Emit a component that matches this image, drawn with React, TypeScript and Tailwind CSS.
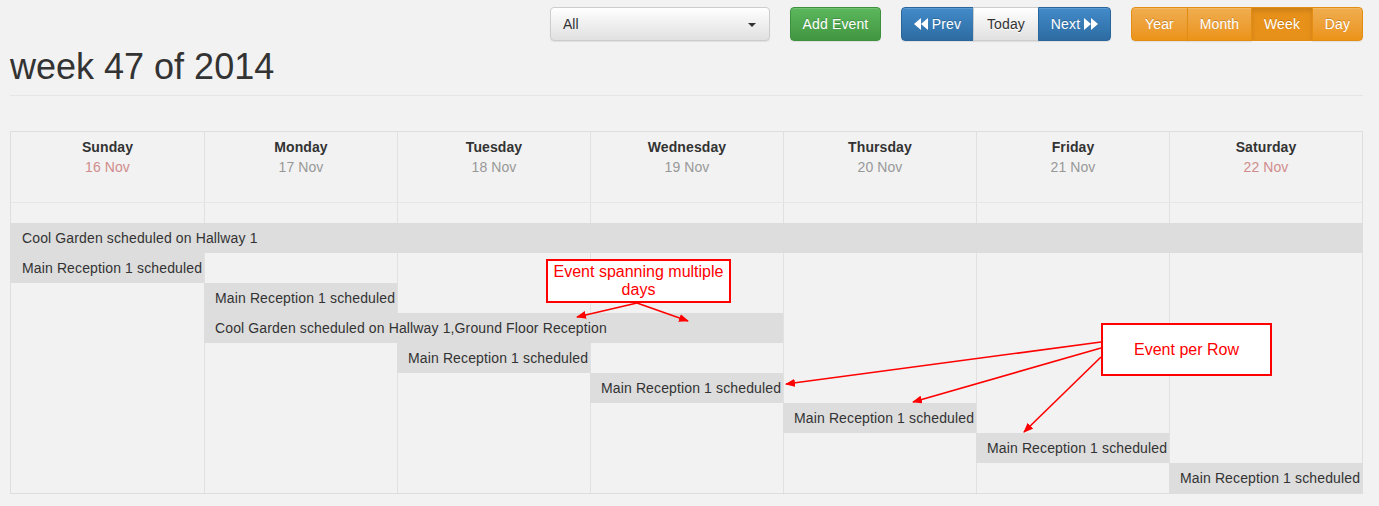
import React from "react";

type Day = { name: string; date: string; weekend?: boolean };
type CalEvent = { start: number; span: number; title: string };

const days: Day[] = [
  { name: "Sunday", date: "16 Nov", weekend: true },
  { name: "Monday", date: "17 Nov" },
  { name: "Tuesday", date: "18 Nov" },
  { name: "Wednesday", date: "19 Nov" },
  { name: "Thursday", date: "20 Nov" },
  { name: "Friday", date: "21 Nov" },
  { name: "Saturday", date: "22 Nov", weekend: true },
];

const events: CalEvent[] = [
  { start: 0, span: 7, title: "Cool Garden scheduled on Hallway 1" },
  { start: 0, span: 1, title: "Main Reception 1 scheduled" },
  { start: 1, span: 1, title: "Main Reception 1 scheduled" },
  { start: 1, span: 3, title: "Cool Garden scheduled on Hallway 1,Ground Floor Reception" },
  { start: 2, span: 1, title: "Main Reception 1 scheduled" },
  { start: 3, span: 1, title: "Main Reception 1 scheduled" },
  { start: 4, span: 1, title: "Main Reception 1 scheduled" },
  { start: 5, span: 1, title: "Main Reception 1 scheduled" },
  { start: 6, span: 1, title: "Main Reception 1 scheduled" },
];

const spanClass: Record<number, string> = {
  1: "col-span-1",
  2: "col-span-2",
  3: "col-span-3",
  4: "col-span-4",
  5: "col-span-5",
  6: "col-span-6",
  7: "col-span-7",
};

const btnBase =
  "h-[34px] border text-[14px] leading-[20px] flex items-center justify-center tracking-[0.13px] shadow-[inset_0_1px_0_rgba(255,255,255,.15),0_1px_1px_rgba(0,0,0,.075)]";
const colored = "text-white [text-shadow:0_-1px_0_rgba(0,0,0,0.2)]";

function Backward() {
  return (
    <svg width="14" height="12" viewBox="0 0 14 12" className="mr-[4px]">
      <polygon points="0,6 7,0 7,12" fill="white" />
      <polygon points="7,6 14,0 14,12" fill="white" />
    </svg>
  );
}

function Forward() {
  return (
    <svg width="14" height="12" viewBox="0 0 14 12" className="ml-[4px]">
      <polygon points="0,0 7,6 0,12" fill="white" />
      <polygon points="7,0 14,6 7,12" fill="white" />
    </svg>
  );
}

function EventRow({ ev }: { ev: CalEvent }) {
  const cells: React.ReactNode[] = [];
  for (let c = 0; c < 7; c++) {
    if (c === ev.start) {
      cells.push(
        <div
          key={c}
          className={`${spanClass[ev.span]} h-[30px] bg-[#dddddd] pl-[11px] leading-[30px] tracking-[0.13px] whitespace-nowrap overflow-hidden text-[#333]`}
        >
          {ev.title}
        </div>
      );
      c += ev.span - 1;
    } else {
      cells.push(<div key={c} className={`h-[30px] ${c > 0 ? "border-l border-[#e1e1e1]" : ""}`} />);
    }
  }
  return <div className="grid grid-cols-7">{cells}</div>;
}

export default function App() {
  return (
    <div className="relative min-h-screen bg-[#f2f2f2] font-['Liberation_Sans',Arial,sans-serif] text-[14px] text-[#333]">
      <div className="ml-[10px] w-[1353px] pt-[7px]">
        {/* toolbar */}
        <div className="flex justify-end gap-[20px]">
          <div className="relative flex h-[34px] w-[220px] items-center rounded-[4px] border border-[#cccccc] bg-linear-to-b from-white to-[#e0e0e0] pl-[12px] shadow-[0_1px_1px_rgba(0,0,0,.075)]">
            All
            <span className="absolute right-[13px] top-[15px] h-0 w-0 border-x-[4px] border-t-[4px] border-x-transparent border-t-[#333]" />
          </div>
          <button className={`${btnBase} ${colored} w-[91px] rounded-[4px] border-[#3e8f3e] bg-linear-to-b from-[#5cb85c] to-[#419641]`}>
            Add Event
          </button>
          <div className="flex">
            <button className={`${btnBase} ${colored} w-[73px] rounded-l-[4px] border-[#2b669a] bg-linear-to-b from-[#428bca] to-[#2d6ca2]`}>
              <Backward />
              Prev
            </button>
            <button className={`${btnBase} w-[66px] -ml-px border-[#cccccc] bg-linear-to-b from-white to-[#e0e0e0] text-[#333] [text-shadow:0_1px_0_#fff]`}>
              Today
            </button>
            <button className={`${btnBase} ${colored} w-[73px] -ml-px rounded-r-[4px] border-[#2b669a] bg-linear-to-b from-[#428bca] to-[#2d6ca2]`}>
              Next
              <Forward />
            </button>
          </div>
          <div className="flex">
            <button className={`${btnBase} ${colored} w-[57px] rounded-l-[4px] border-[#e38d13] bg-linear-to-b from-[#f0ad4e] to-[#eb9316]`}>
              Year
            </button>
            <button className={`${btnBase} ${colored} w-[65px] -ml-px border-[#e38d13] bg-linear-to-b from-[#f0ad4e] to-[#eb9316]`}>
              Month
            </button>
            <button className={`${btnBase} ${colored} w-[62px] -ml-px border-[#e38d13] bg-[#e8911a] shadow-[inset_0_3px_5px_rgba(0,0,0,.125)]`}>
              Week
            </button>
            <button className={`${btnBase} ${colored} w-[51px] -ml-px rounded-r-[4px] border-[#e38d13] bg-linear-to-b from-[#f0ad4e] to-[#eb9316]`}>
              Day
            </button>
          </div>
        </div>

        {/* title */}
        <div className="mt-[6px] border-b border-[#e5e5e5] pb-[8px]">
          <h1 className="h-[40px] text-[36px] leading-[40px] font-normal text-[#333]">week 47 of 2014</h1>
        </div>

        {/* calendar */}
        <div className="mt-[35px] border border-[#dedede]">
          <div className="grid grid-cols-7 border-b border-[#e6e6e6]">
            {days.map((d, i) => (
              <div
                key={d.name}
                className={`h-[70px] pt-[5px] text-center leading-[20px] tracking-[0.1px] ${i > 0 ? "border-l border-[#e1e1e1]" : ""}`}
              >
                <div className="font-bold text-[#333]">{d.name}</div>
                <div className={d.weekend ? "text-[#d08c8c]" : "text-[#989898]"}>{d.date}</div>
              </div>
            ))}
          </div>
          <div className="grid grid-cols-7">
            {days.map((d, i) => (
              <div key={d.name} className={`h-[20px] ${i > 0 ? "border-l border-[#e1e1e1]" : ""}`} />
            ))}
          </div>
          {events.map((ev, i) => (
            <EventRow key={i} ev={ev} />
          ))}
        </div>
      </div>

      {/* annotations */}
      <svg className="pointer-events-none absolute left-0 top-0" width="1379" height="506">
        <defs>
          <marker id="ah" markerWidth="10" markerHeight="8" refX="9" refY="4" orient="auto" markerUnits="userSpaceOnUse">
            <polygon points="0,0 10,4 0,8" fill="#ff0000" />
          </marker>
        </defs>
        <g stroke="#ff0000" strokeWidth="1.6" markerEnd="url(#ah)">
          <line x1="637" y1="303" x2="577" y2="317" />
          <line x1="637" y1="303" x2="688" y2="321" />
          <line x1="1101" y1="342" x2="786" y2="384" />
          <line x1="1101" y1="348" x2="913" y2="402" />
          <line x1="1101" y1="357" x2="1024" y2="432" />
        </g>
      </svg>
      <div className="absolute left-[546px] top-[259px] flex h-[44px] w-[185px] flex-col items-center justify-center border-2 border-[#ff0000] bg-white text-center text-[16px] leading-[18px] text-[#ff0000]">
        <span>Event spanning multiple</span>
        <span>days</span>
      </div>
      <div className="absolute left-[1101px] top-[323px] flex h-[53px] w-[171px] items-center justify-center border-2 border-[#ff0000] bg-white text-[16px] text-[#ff0000]">
        Event per Row
      </div>
    </div>
  );
}
